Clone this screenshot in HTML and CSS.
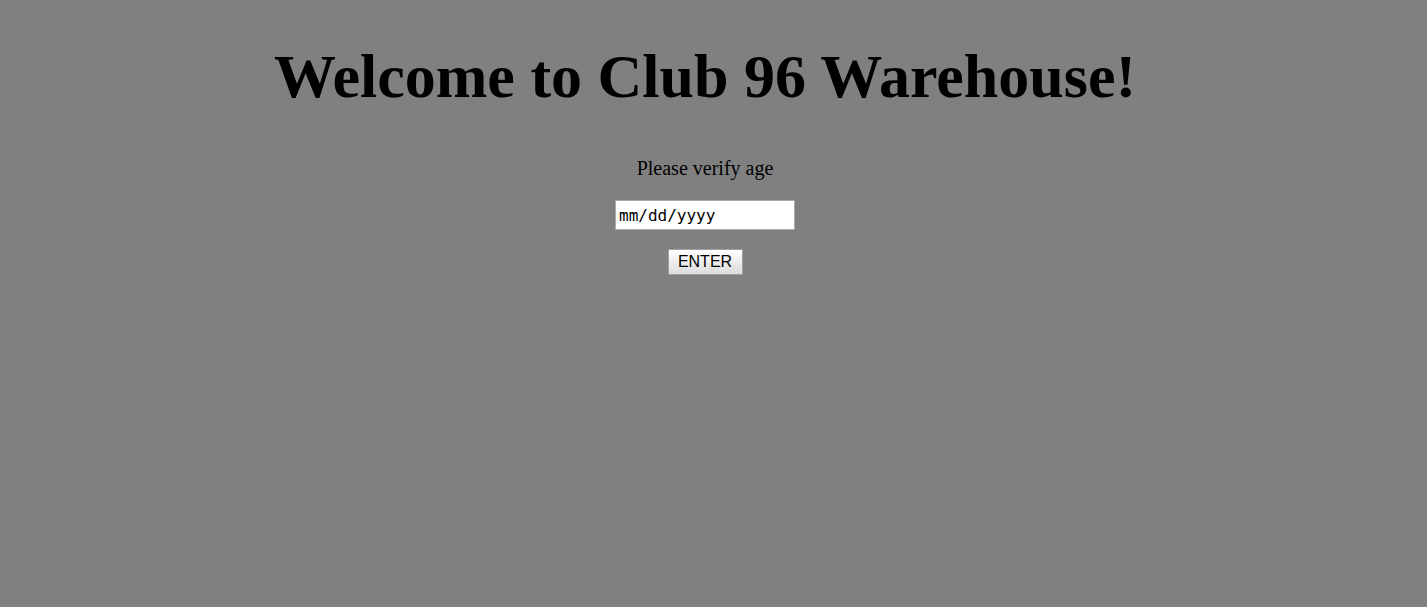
FILE: index.html
```html
<!DOCTYPE html>
<html>
<head>
<meta charset="utf-8">
<link rel="stylesheet" href="styles.css">
</head>
<body>
<div class="page">
  <h1 class="title">Welcome to Club 96 Warehouse!</h1>
  <p class="prompt">Please verify age</p>
  <div class="field"><input class="date" type="text" value="mm/dd/yyyy"></div>
  <div class="actions"><button class="enter">ENTER</button></div>
</div>
</body>
</html>
```

FILE: styles.css
```css
html, body {
  background: #808080;
}
body {
  margin: 8px 25px 8px 8px;
  font-family: "Liberation Serif", serif;
  color: #000;
}
.page {
  display: flex;
  flex-direction: column;
  align-items: center;
}
.title {
  font-size: 62px;
  font-weight: bold;
  margin: 31px 0 0;
  line-height: 74px;
}
.prompt {
  font-size: 20px;
  margin: 44px 0 0;
  line-height: 23px;
}
.field {
  margin-top: 20px;
}
.date {
  box-sizing: border-box;
  width: 180px;
  height: 30px;
  border: 1px solid #a9a9a9;
  background: #fff;
  font-family: "DejaVu Sans Mono", monospace;
  font-size: 16px;
  padding: 0 3px;
  color: #000;
  outline: none;
}
.actions {
  margin-top: 19px;
}
.enter {
  box-sizing: border-box;
  width: 75px;
  height: 26px;
  font-family: "Liberation Sans", Arial, sans-serif;
  font-size: 16px;
  color: #000;
  border: 1px solid #a0a0a0;
  background: linear-gradient(#ffffff, #dcdcdc);
  padding: 0;
}
```
